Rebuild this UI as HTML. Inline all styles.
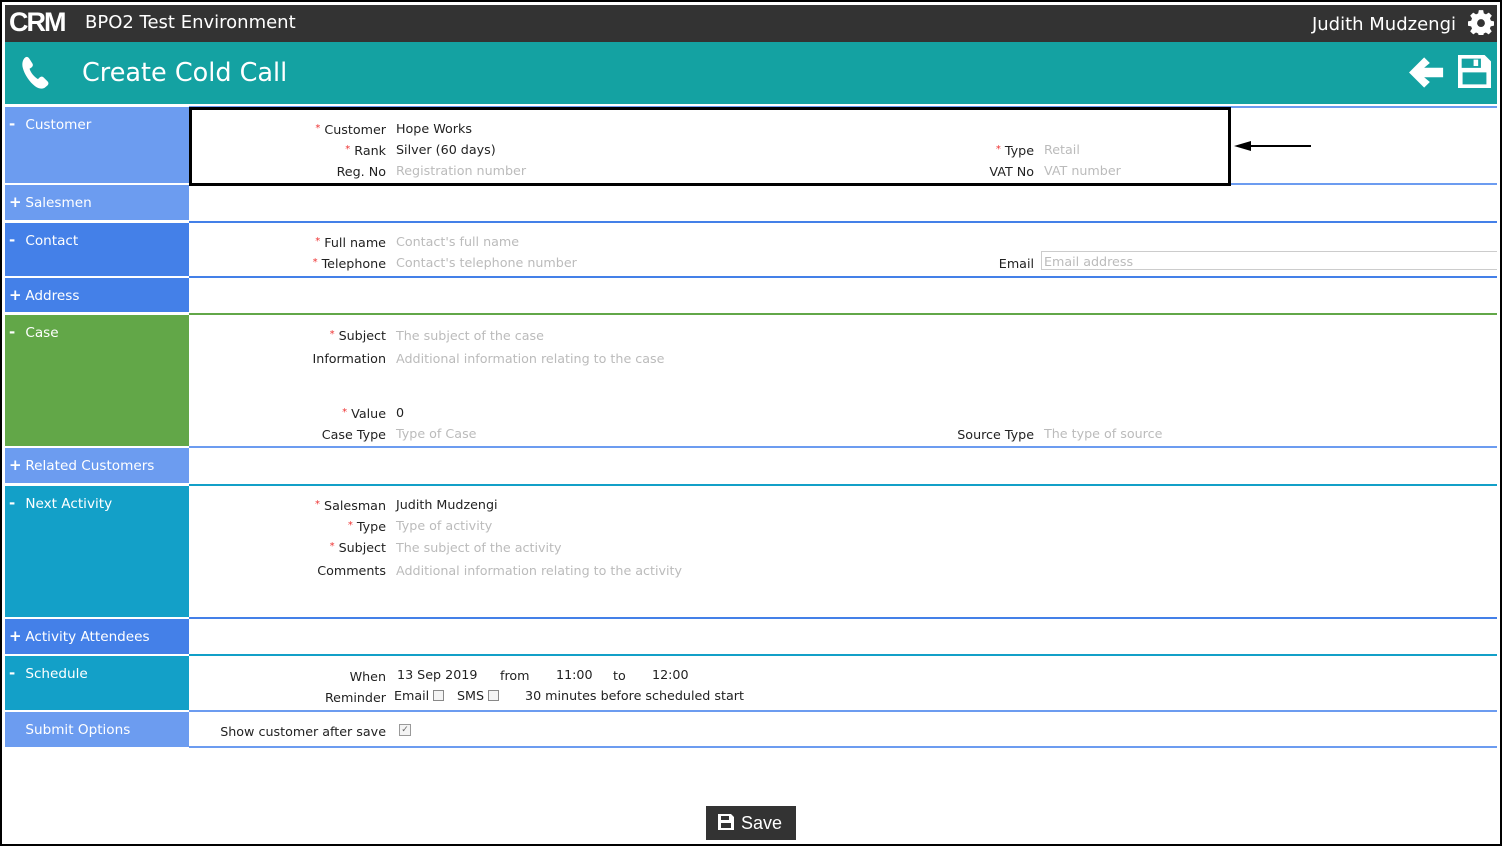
<!DOCTYPE html>
<html><head><meta charset="utf-8"><style>
*{margin:0;padding:0;box-sizing:border-box}
html,body{width:1502px;height:846px;overflow:hidden;background:#fff;font-family:"DejaVu Sans","Liberation Sans",sans-serif}
#frame{position:absolute;left:0;top:0;width:1502px;height:846px;border:2px solid #000}
.abs{position:absolute}
#hdr{left:5px;top:5px;width:1492px;height:37px;background:#333}
#title{left:5px;top:42px;width:1492px;height:62px;background:#14a2a2}
.side{position:absolute;left:5px;width:184px;color:#fff;font-size:13.6px;padding:10px 0 0 4px;white-space:nowrap}
.side b{display:inline-block;width:12px;font-weight:bold;font-size:15px;line-height:14px}
.line{position:absolute;left:189px;width:1308px;height:2px}
.lb{position:absolute;right:1116px;font-size:12.7px;color:#222;white-space:nowrap}
.lb i{color:#e33;font-style:normal;font-size:10px;vertical-align:3px;margin-right:4px}
.v{position:absolute;left:396px;font-size:12.7px;color:#222;white-space:nowrap}
.ph{color:#bbb}
.c1{background:#6c9cf0}.c2{background:#4480e8}.c3{background:#62a748}.c4{background:#13a0c8}
.cb{display:inline-block;width:11px;height:11px;border:1px solid #888;vertical-align:-1px;background:#f4f4f4}
</style></head><body>
<div id="frame"></div>
<div class="abs" id="hdr">
 <div class="abs" style="left:4px;top:2px;color:#fff;font:bold 27px 'Liberation Sans',sans-serif;letter-spacing:-2px;line-height:30px">CRM</div>
 <div class="abs" style="left:80px;top:7px;color:#fff;font-size:18px">BPO2 Test Environment</div>
 <div class="abs" style="right:41px;top:9px;color:#fff;font-size:18px">Judith Mudzengi</div>
 <svg class="abs" style="left:1463px;top:4px" width="26" height="26" viewBox="0 0 24 24"><path fill="#fff" d="M10 1h4l.6 3 2 1 2.6-1.7 2.8 2.8L20.3 8.7l.9 2.2 2.8.5v4l-3 .6-.8 2 1.7 2.6-2.8 2.8-2.6-1.7-2 .9-.5 3h-4l-.6-3-2-.9-2.5 1.7-2.9-2.8 1.7-2.6-.8-2-3-.6v-4l3-.5.8-2.2L2 6.1l2.8-2.8 2.6 1.7 2-1z"/><circle cx="12" cy="13" r="3.6" fill="#333"/></svg>
</div>
<div class="abs" id="title">
 <svg class="abs" style="left:13px;top:13px" width="36" height="36" viewBox="0 0 24 24"><path fill="#fff" d="M5 1.5c1-.6 2 0 2.6 1l2 3.2c.6 1 .3 2-.6 2.6l-1.3.9c.8 2.6 2.9 5.3 5.6 6.9l1.1-1.1c.8-.8 2-.8 2.7 0l2.6 2.6c.8.8.8 2-.1 2.7l-1.6 1.4c-1.4 1.2-4 .9-6.6-.9C7.8 18.2 4.3 13 3.2 8.6 2.5 5.8 3 3 5 1.5z"/></svg>
 <div class="abs" style="left:77px;top:16px;color:#fff;font-size:25.5px">Create Cold Call</div>
 <svg class="abs" style="left:1404px;top:14px" width="36" height="33" viewBox="0 0 38 34"><path fill="#fff" d="M0 17L16 1l6 6-6 5h20v10H16l6 5-6 6z"/></svg>
 <svg class="abs" style="left:1453px;top:13px" width="33" height="33" viewBox="0 0 36 36"><path fill="#fff" d="M0 0h29l7 7v29H0zM4 4v10h21V4zM5 19v13h26V19z"/><path fill="#fff" d="M17 5h5v7h-5z"/></svg>
</div>

<div class="side c1" style="top:107px;height:76px"><b>-</b> Customer</div>
<div class="side c1" style="top:185px;height:35px"><b>+</b> Salesmen</div>
<div class="side c2" style="top:223px;height:53px"><b>-</b> Contact</div>
<div class="side c2" style="top:278px;height:34px"><b>+</b> Address</div>
<div class="side c3" style="top:315px;height:131px"><b>-</b> Case</div>
<div class="side c1" style="top:448px;height:35px"><b>+</b> Related Customers</div>
<div class="side c4" style="top:486px;height:131px"><b>-</b> Next Activity</div>
<div class="side c2" style="top:619px;height:35px"><b>+</b> Activity Attendees</div>
<div class="side c4" style="top:656px;height:54px"><b>-</b> Schedule</div>
<div class="side c1" style="top:712px;height:35px"><b></b> Submit Options</div>

<div class="line c1" style="top:106px"></div>
<div class="line c1" style="top:183px"></div>
<div class="line c2" style="top:221px"></div>
<div class="line c2" style="top:276px"></div>
<div class="line c3" style="top:313px"></div>
<div class="line c1" style="top:446px"></div>
<div class="line c4" style="top:484px"></div>
<div class="line c2" style="top:617px"></div>
<div class="line c4" style="top:654px"></div>
<div class="line c1" style="top:710px"></div>
<div class="line c1" style="top:746px"></div>

<div class="abs" style="left:189px;top:107px;width:1042px;height:79px;border:3px solid #000;background:#fff"></div>
<div class="lb" style="top:122px"><i>*</i>Customer</div><div class="v" style="top:121px">Hope Works</div>
<div class="lb" style="top:143px"><i>*</i>Rank</div><div class="v" style="top:142px">Silver (60 days)</div>
<div class="lb" style="top:164px">Reg. No</div><div class="v ph" style="top:163px">Registration number</div>
<div class="lb" style="top:143px;right:468px"><i>*</i>Type</div><div class="v ph" style="top:142px;left:1044px">Retail</div>
<div class="lb" style="top:164px;right:468px">VAT No</div><div class="v ph" style="top:163px;left:1044px">VAT number</div>
<svg class="abs" style="left:1232px;top:139px" width="82" height="14"><path d="M2 7L19 2v10z" fill="#000"/><path d="M15 7h64" stroke="#000" stroke-width="2"/></svg>

<div class="lb" style="top:235px"><i>*</i>Full name</div><div class="v ph" style="top:234px">Contact's full name</div>
<div class="lb" style="top:256px"><i>*</i>Telephone</div><div class="v ph" style="top:255px">Contact's telephone number</div>
<div class="lb" style="top:256px;right:468px">Email</div>
<div class="abs" style="left:1041px;top:251px;width:456px;height:19px;border:1px solid #ccc;border-right:none;font-size:12.7px;color:#bbb;padding:2px 0 0 2px">Email address</div>

<div class="lb" style="top:328px"><i>*</i>Subject</div><div class="v ph" style="top:328px">The subject of the case</div>
<div class="lb" style="top:351px">Information</div><div class="v ph" style="top:351px">Additional information relating to the case</div>
<div class="lb" style="top:406px"><i>*</i>Value</div><div class="v" style="top:405px">0</div>
<div class="lb" style="top:427px">Case Type</div><div class="v ph" style="top:426px">Type of Case</div>
<div class="lb" style="top:427px;right:468px">Source Type</div><div class="v ph" style="top:426px;left:1044px">The type of source</div>

<div class="lb" style="top:498px"><i>*</i>Salesman</div><div class="v" style="top:497px">Judith Mudzengi</div>
<div class="lb" style="top:519px"><i>*</i>Type</div><div class="v ph" style="top:518px">Type of activity</div>
<div class="lb" style="top:540px"><i>*</i>Subject</div><div class="v ph" style="top:540px">The subject of the activity</div>
<div class="lb" style="top:563px">Comments</div><div class="v ph" style="top:563px">Additional information relating to the activity</div>

<div class="lb" style="top:669px">When</div>
<div class="v" style="top:667px;left:397px">13 Sep 2019</div>
<div class="v" style="top:668px;left:500px">from</div>
<div class="v" style="top:667px;left:556px">11:00</div>
<div class="v" style="top:668px;left:613px">to</div>
<div class="v" style="top:667px;left:652px">12:00</div>
<div class="lb" style="top:690px">Reminder</div>
<div class="v" style="top:688px;left:394px">Email <span class="cb"></span></div>
<div class="v" style="top:688px;left:457px">SMS <span class="cb"></span></div>
<div class="v" style="top:688px;left:525px">30 minutes before scheduled start</div>

<div class="lb" style="top:724px">Show customer after save</div>
<div class="abs" style="left:399px;top:724px;width:12px;height:12px;border:1px solid #999;background:#f4f4f4;font-size:9px;color:#666;line-height:10px;text-align:center">✓</div>

<div class="abs" style="left:706px;top:806px;width:90px;height:34px;background:#333;color:#fff;font:18px 'Liberation Sans',sans-serif">
 <svg class="abs" style="left:12px;top:8px" width="16" height="16" viewBox="0 0 16 16"><path fill="#fff" d="M0 0h13l3 3v13H0zM3 2v4h8V2zM3 9v5h10V9z"/></svg>
 <span class="abs" style="left:35px;top:7px">Save</span>
</div>
</body></html>
